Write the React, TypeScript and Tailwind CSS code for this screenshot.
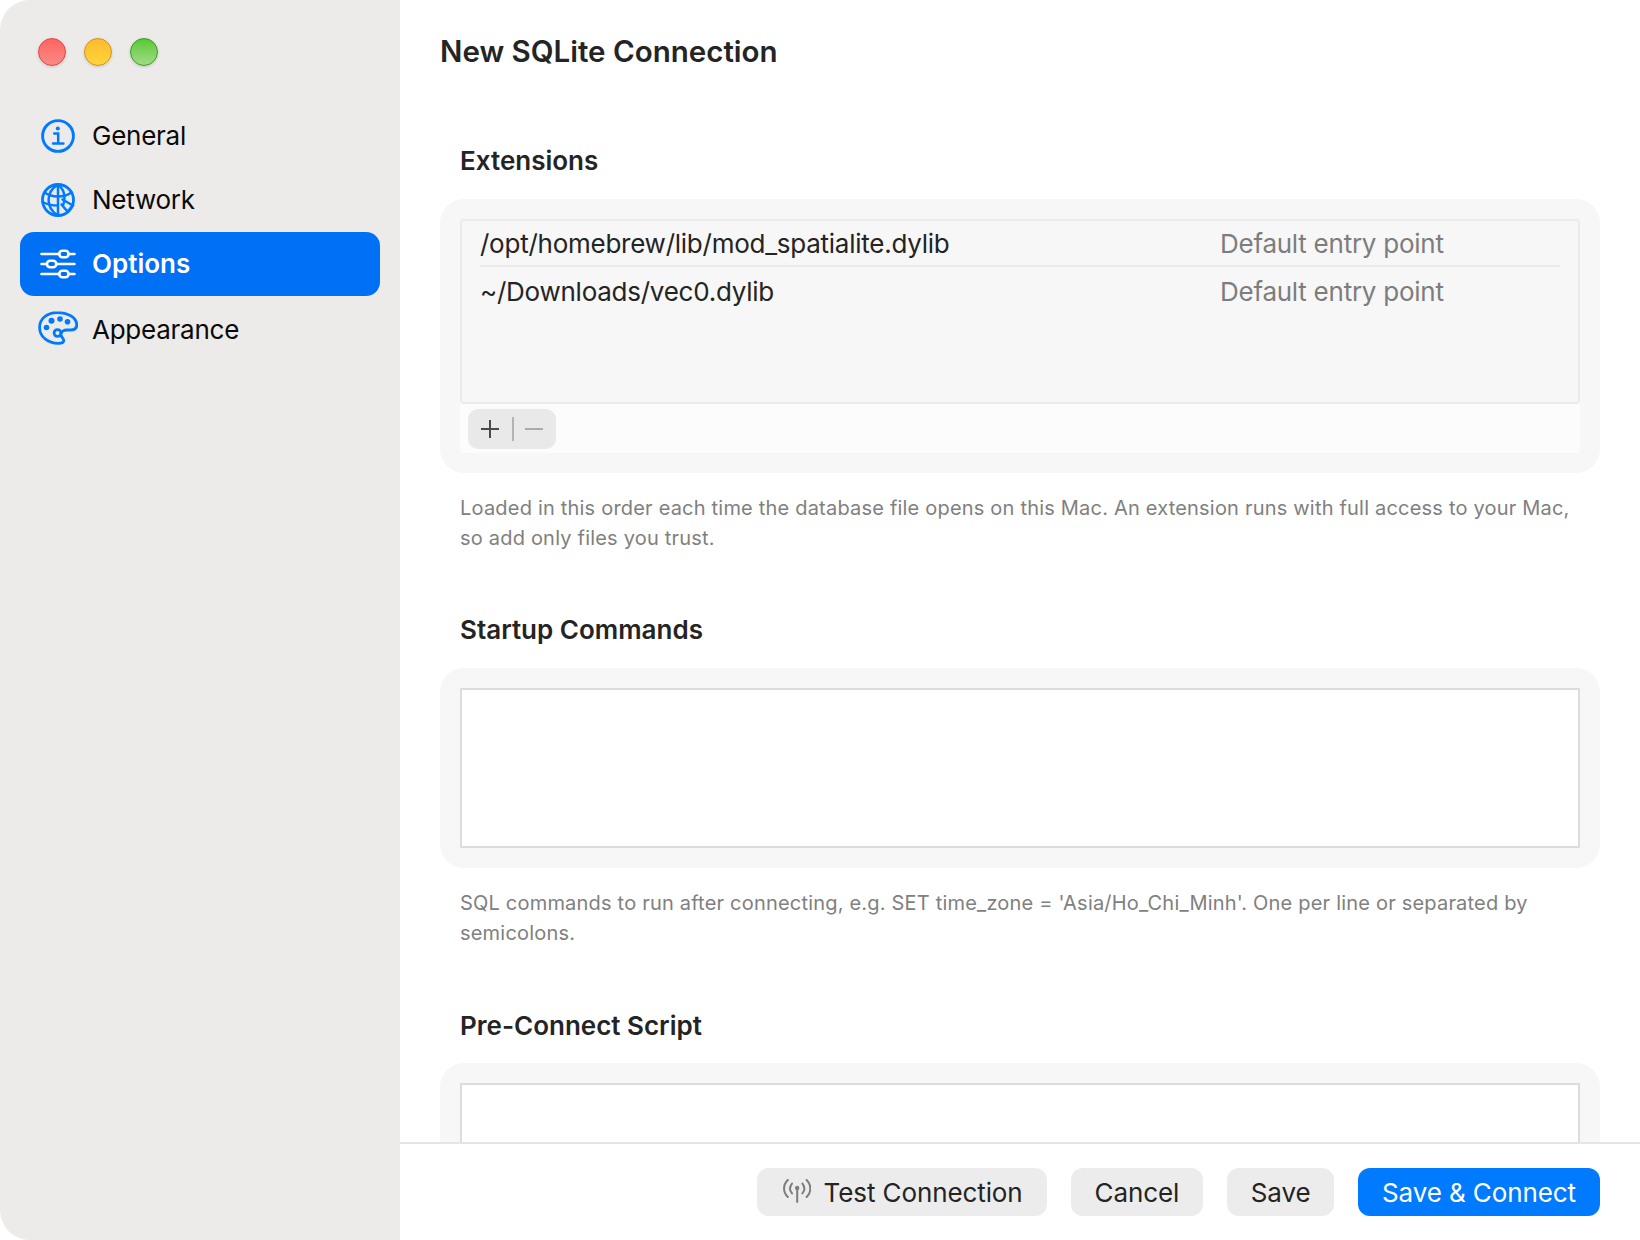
import React from 'react';

const NavItem = ({ icon, label, active, labelClass = '' }: { icon: React.ReactNode; label: string; active?: boolean; labelClass?: string }) => (
  <div
    className={`flex h-[64px] items-center rounded-[14px] pl-[16px] ${
      active ? 'bg-[#0070f5] font-semibold text-white' : 'text-[#0a0a0a]'
    }`}
  >
    <div className={`flex w-[44px] shrink-0 items-center justify-center ${active ? 'text-white' : 'text-[#007aff]'}`}>
      {icon}
    </div>
    <span className={`ml-[12px] leading-none ${active ? 'text-[26px]' : 'text-[26px] tracking-[-0.25px]'} ${labelClass}`}>{label}</span>
  </div>
);

const InfoIcon = () => (
  <svg width="36" height="36" viewBox="0 0 36 36" fill="none" stroke="currentColor" strokeWidth="2.9" strokeLinecap="round">
    <circle cx="18" cy="18" r="15.4" />
    <circle cx="17.8" cy="10.400" r="2" fill="currentColor" stroke="none" />
    <path strokeWidth="2.500" d="M14.200 15.600h4v9.600M13 25.400h10.400" />
  </svg>
);

const GlobeIcon = () => (
  <svg width="36" height="36" viewBox="0 0 36 36" fill="none" stroke="currentColor" strokeWidth="2.500" strokeLinecap="round">
    <circle cx="18" cy="18" r="15.500" strokeWidth="2.800" />
    <path d="M18 2.600c-6.600 3.800-9.400 9-9.400 15.400s2.800 11.600 9.400 15.400M18 2.600c4.600 3.600 6.400 8.600 6.400 13 0 3-.4 5.600-1.400 8M18 2.600V22" />
    <path d="M4.600 10.600c4 2.800 8 4 13.400 4 5.400 0 9.600-1.200 13.400-4M2.600 20c4.700 2.600 9.700 3.500 15.400 3.500M22.500 17.500l10.300 6-5.300 6-6-7M18 33.400v-10" />
  </svg>
);

const SlidersIcon = () => (
  <svg width="36" height="36" viewBox="0 0 36 36" fill="none" stroke="currentColor" strokeWidth="2.600" strokeLinecap="round">
    <path d="M1.500 8h17.700M28.600 8h5.900M1.500 18h5.400M16.300 18h18.200M1.500 28h17.700M28.600 28h5.900" />
    <rect x="19.200" y="4.800" width="9.400" height="6.400" rx="3.200" />
    <rect x="6.900" y="14.800" width="9.400" height="6.400" rx="3.200" />
    <rect x="19.200" y="24.800" width="9.400" height="6.400" rx="3.200" />
  </svg>
);

const PaletteIcon = () => (
  <svg width="40" height="34" viewBox="0 0 40 34" fill="none" stroke="currentColor" strokeWidth="2.800">
    <path d="M19 1.600C9 1.600 1.600 7.800 1.600 16.400 1.600 25.800 10 32.400 20.400 32.400c3.400 0 5.400-.8 5.400-2.800 0-2.400-2.800-3.200-2.800-6 0-3 2.800-4.600 6.200-4.600h3.400c4 0 6.200-2.200 6.200-5.400C38.400 6 29.600 1.600 19 1.600Z" />
    <circle cx="19.500" cy="22" r="3.400" />
    <g fill="currentColor" stroke="none">
      <circle cx="8.500" cy="16.500" r="2.800" />
      <circle cx="13.500" cy="9.800" r="3" />
      <circle cx="22" cy="8" r="2.800" />
      <circle cx="29.500" cy="10.800" r="2.800" />
    </g>
  </svg>
);

const AntennaIcon = () => (
  <svg width="28" height="24" viewBox="0 0 28 24" fill="none" stroke="#7d7d7d" strokeWidth="2" strokeLinecap="round">
    <circle cx="14.200" cy="9" r="2.200" fill="#7d7d7d" stroke="none" />
    <path d="M14.200 10v13" />
    <path d="M9 4.600c-2.400 3-2.400 6.800 0 9.800M19.400 4.600c2.400 3 2.400 6.800 0 9.800" />
    <path d="M4.800 1c-5 5-5 12 0 17M23.600 1c5 5 5 12 0 17" />
  </svg>
);

const SectionTitle = ({ children }: { children: React.ReactNode }) => (
  <h2 className="ml-[20px] text-[26px] font-semibold leading-[34px] text-[#242424]">{children}</h2>
);

const Helper = ({ children }: { children: React.ReactNode }) => (
  <p className="mx-[20px] mt-[20px] text-[20px] leading-[30px] tracking-[0.2px] text-[#808080]">{children}</p>
);

const ExtensionRow = ({ path }: { path: string }) => (
  <div className="flex h-[44px] items-center text-[26px] tracking-[-0.25px]">
    <span className="w-[740px] text-[#242424]">{path}</span>
    <span className="text-[#7d7d7d]">Default entry point</span>
  </div>
);

const FooterButton = ({ children, primary, className = 'px-[24px]' }: { children: React.ReactNode; primary?: boolean; className?: string }) => (
  <button
    className={`flex h-[48px] items-center rounded-[12px] pt-[2px] text-[26px] tracking-[-0.1px] ${className} ${
      primary ? 'bg-[#007aff] text-white' : 'bg-[#ececec] text-[#242424]'
    }`}
  >
    {children}
  </button>
);

export default function App() {
  return (
    <div className="flex h-[1240px] w-[1640px] overflow-hidden bg-white [font-family:Inter,sans-serif]">
      <aside className="w-[400px] shrink-0 rounded-l-[30px] bg-[#ecebe9] px-[20px] pt-[38px]">
        <div className="ml-[18px] flex gap-[18px]">
          <div className="size-[28px] rounded-full border border-[#e0443e] bg-linear-to-b from-[#ff6460] to-[#f88a86] shadow-[0_1px_3px_rgba(0,0,0,0.15)]" />
          <div className="size-[28px] rounded-full border border-[#dc8c10] bg-linear-to-b from-[#febb2e] to-[#ffd53d] shadow-[0_1px_3px_rgba(0,0,0,0.15)]" />
          <div className="size-[28px] rounded-full border border-[#2f9e1e] bg-linear-to-b from-[#59c92e] to-[#a0db85] shadow-[0_1px_3px_rgba(0,0,0,0.15)]" />
        </div>
        <nav className="mt-[38px]">
          <NavItem icon={<InfoIcon />} label="General" />
          <NavItem icon={<GlobeIcon />} label="Network" />
          <NavItem icon={<SlidersIcon />} label="Options" active />
          <NavItem icon={<PaletteIcon />} label="Appearance" labelClass="pt-[3px]" />
        </nav>
      </aside>

      <main className="flex min-w-0 flex-1 flex-col">
        <div className="min-h-0 flex-1 overflow-hidden px-[40px] pt-[31px]">
          <h1 className="text-[29.5px] font-semibold leading-[40px] text-[#242424]">New SQLite Connection</h1>

          <div className="mt-[73px]">
            <SectionTitle>Extensions</SectionTitle>
          </div>
          <section className="mt-[21px] rounded-[24px] bg-[#f7f7f7] p-[20px]">
            <div className="h-[185px] rounded-[4px] border-2 border-[#ebebeb] px-[18px]">
              <div className="border-b-2 border-[#ebebeb]">
                <ExtensionRow path="/opt/homebrew/lib/mod_spatialite.dylib" />
              </div>
              <div className="mt-[2px]">
                <ExtensionRow path="~/Downloads/vec0.dylib" />
              </div>
            </div>
            <div className="flex h-[49px] items-center bg-[#fcfcfc] pl-[8px]">
              <div className="flex h-[40px] w-[88px] items-center rounded-[10px] bg-[#e9e9e9]">
                <span className="flex w-[44px] justify-center pr-[1px]">
                  <svg width="20" height="20" viewBox="0 0 20 20" stroke="#4a4a4a" strokeWidth="2">
                    <path d="M10 1v18M1 10h18" />
                  </svg>
                </span>
                <span className="h-[24px] w-[2px] bg-[#b4b4b4]" />
                <span className="flex flex-1 justify-center pr-[2px]">
                  <svg width="20" height="20" viewBox="0 0 20 20" stroke="#ababab" strokeWidth="2">
                    <path d="M1 10h18" />
                  </svg>
                </span>
              </div>
            </div>
          </section>
          <Helper>
            Loaded in this order each time the database file opens on this Mac. An extension runs with full access to your Mac, so add only files you trust.
          </Helper>

          <div className="mt-[60px]">
            <SectionTitle>Startup Commands</SectionTitle>
          </div>
          <section className="mt-[21px] rounded-[24px] bg-[#f7f7f7] p-[20px]">
            <div className="h-[160px] border-2 border-[#dcdcdc] bg-white" />
          </section>
          <Helper>
            SQL commands to run after connecting, e.g. SET time_zone = 'Asia/Ho_Chi_Minh'. One per line or separated by semicolons.
          </Helper>

          <div className="mt-[61px]">
            <SectionTitle>Pre-Connect Script</SectionTitle>
          </div>
          <section className="mt-[20px] rounded-[24px] bg-[#f7f7f7] p-[20px]">
            <div className="h-[160px] border-2 border-[#dcdcdc] bg-white" />
          </section>
        </div>

        <footer className="flex h-[98px] shrink-0 items-center justify-end gap-[24px] border-t-2 border-[#e5e5e5] pb-[1px] pr-[40px]">
          <FooterButton>
            <span className="mb-[3px] ml-[2px] mr-[13px]"><AntennaIcon /></span>
            Test Connection
          </FooterButton>
          <FooterButton>Cancel</FooterButton>
          <FooterButton className="px-[23.5px]">Save</FooterButton>
          <FooterButton primary>Save &amp; Connect</FooterButton>
        </footer>
      </main>
    </div>
  );
}
